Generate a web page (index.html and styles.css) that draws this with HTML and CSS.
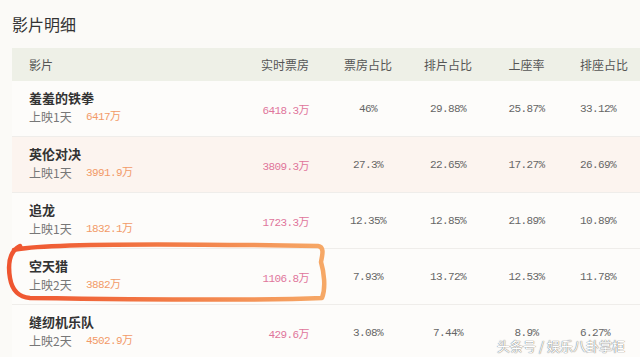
FILE: index.html
```html
<!DOCTYPE html>
<html lang="zh">
<head>
<meta charset="utf-8">
<link rel="stylesheet" href="styles.css">
</head>
<body>
<div class="page">
  <h1 class="title">影片明细</h1>
  <div class="table">
    <div class="row head">
      <div class="c name">影片</div>
      <div class="c box">实时票房</div>
      <div class="c pct">票房占比</div>
      <div class="c pct">排片占比</div>
      <div class="c pct">上座率</div>
      <div class="c pct">排座占比</div>
    </div>
    <div class="row">
      <div class="c name"><div class="film">羞羞的铁拳</div><div class="sub"><span class="days">上映1天</span><span class="total">6417万</span></div></div>
      <div class="c box num pink">6418.3万</div>
      <div class="c pct num">46%</div>
      <div class="c pct num">29.88%</div>
      <div class="c pct num">25.87%</div>
      <div class="c pct num">33.12%</div>
    </div>
    <div class="row alt">
      <div class="c name"><div class="film">英伦对决</div><div class="sub"><span class="days">上映1天</span><span class="total">3991.9万</span></div></div>
      <div class="c box num pink">3809.3万</div>
      <div class="c pct num">27.3%</div>
      <div class="c pct num">22.65%</div>
      <div class="c pct num">17.27%</div>
      <div class="c pct num">26.69%</div>
    </div>
    <div class="row">
      <div class="c name"><div class="film">追龙</div><div class="sub"><span class="days">上映1天</span><span class="total">1832.1万</span></div></div>
      <div class="c box num pink">1723.3万</div>
      <div class="c pct num">12.35%</div>
      <div class="c pct num">12.85%</div>
      <div class="c pct num">21.89%</div>
      <div class="c pct num">10.89%</div>
    </div>
    <div class="row">
      <div class="c name"><div class="film">空天猎</div><div class="sub"><span class="days">上映2天</span><span class="total">3882万</span></div></div>
      <div class="c box num pink">1106.8万</div>
      <div class="c pct num">7.93%</div>
      <div class="c pct num">13.72%</div>
      <div class="c pct num">12.53%</div>
      <div class="c pct num">11.78%</div>
    </div>
    <div class="row">
      <div class="c name"><div class="film">缝纫机乐队</div><div class="sub"><span class="days">上映2天</span><span class="total">4502.9万</span></div></div>
      <div class="c box num pink">429.6万</div>
      <div class="c pct num">3.08%</div>
      <div class="c pct num">7.44%</div>
      <div class="c pct num">8.9%</div>
      <div class="c pct num">6.27%</div>
    </div>
  </div>
  <svg class="loop" width="640" height="357" viewBox="0 0 640 357">
    <defs>
      <linearGradient id="lg" x1="0" y1="0" x2="1" y2="0">
        <stop offset="0" stop-color="#ef5530"/>
        <stop offset="0.5" stop-color="#f27a45"/>
        <stop offset="1" stop-color="#f6a866"/>
      </linearGradient>
    </defs>
    <path d="M14 250 C 40 243, 200 244, 318 246 C 325 247, 322 256, 321 262 C 324 272, 326 288, 322 298 C 250 301, 100 299, 30 298 C 18 297, 12 290, 10 278 C 8 266, 8 252, 20 246" fill="none" stroke="url(#lg)" stroke-width="4.5" stroke-linecap="round" stroke-linejoin="round"/>
  </svg>
  <div class="mark">头条号 / 娱乐八卦掌柜</div>
</div>
</body>
</html>
```
FILE: styles.css
```css
html, body {
  margin: 0;
  padding: 0;
  background: #fbfaf7;
  overflow: hidden;
}
.page {
  position: relative;
  width: 640px;
  height: 357px;
  overflow: hidden;
  font-family: "Noto Sans CJK SC", "Liberation Sans", sans-serif;
}
.title {
  margin: 0;
  padding: 12px 0 0 12px;
  height: 48px;
  box-sizing: border-box;
  font-size: 16px;
  font-weight: 400;
  line-height: 24px;
  color: #333;
}
.table {
  margin-left: 12px;
  width: 640px;
}
.row {
  display: grid;
  grid-template-columns: 218px 98px 80px 80px 77px 87px;
  height: 56px;
  align-items: center;
  background: #fdfcfa;
  border-bottom: 1px solid #efedea;
  box-sizing: border-box;
}
.row.head {
  height: 33px;
  background: #eef0e7;
  border-bottom: none;
  font-size: 12px;
  color: #555;
}
.row.alt {
  background: #fcf4ef;
}
.c.name {
  padding-left: 17px;
}
.c.box {
  text-align: right;
  padding-right: 19px;
}
.c.pct {
  text-align: center;
}
.row .c.pct:last-child {
  text-align: left;
  padding-left: 15px;
}
.film {
  font-size: 13px;
  font-weight: 700;
  color: #333;
  line-height: 18px;
  margin-top: -2px;
}
.sub {
  display: flex;
  font-size: 12px;
  line-height: 18px;
  color: #777;
  margin-top: 1px;
}
.days {
  width: 57px;
}
.total {
  color: #f29a68;
  font-family: "Liberation Mono", "Noto Sans CJK SC", monospace;
  font-size: 11px;
  letter-spacing: -0.6px;
}
.num {
  font-family: "Liberation Mono", "Noto Sans CJK SC", monospace;
  font-size: 11px;
  letter-spacing: -0.6px;
  color: #666;
}
.pink {
  color: #e0759a;
}
.loop {
  position: absolute;
  left: 0;
  top: 0;
  pointer-events: none;
}
.mark {
  position: absolute;
  left: 497px;
  top: 336px;
  font-size: 13px;
  line-height: 20px;
  color: #ffffff;
  text-shadow: 0 0 1px #777, 0 0 1px #777;
  white-space: nowrap;
}
```
